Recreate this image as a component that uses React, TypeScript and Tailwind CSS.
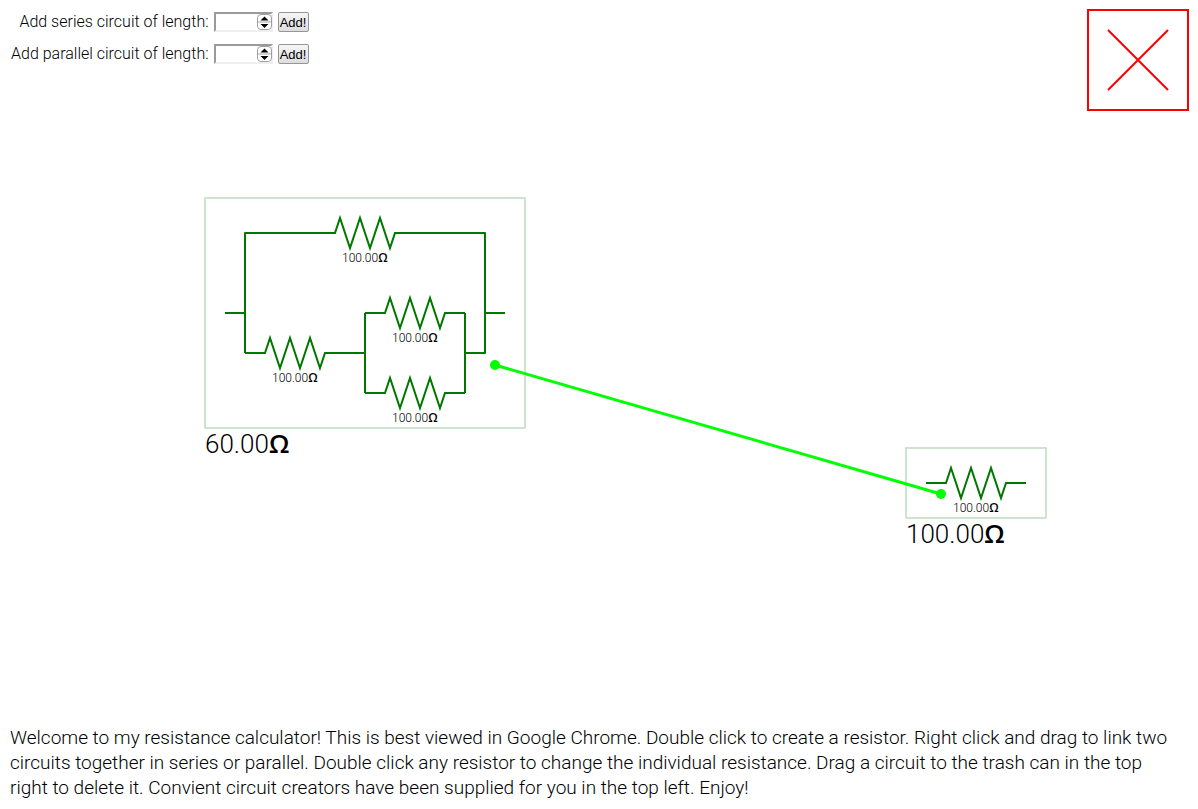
import React from "react";

type Point = { x: number; y: number };

function Resistor({ x, y }: Point) {
  return (
    <g>
      <path
        d={`M${x} ${y}h20l5 -15l10 30l10 -30l10 30l10 -30l10 30l5 -15h20`}
        fill="none"
        stroke="#007800"
        strokeWidth="2"
        strokeLinejoin="miter"
      />
      <text x={x + 27} y={y + 29} fontSize="12" className="fill-black">
        100.00
        <tspan className="font-['Open_Sans',sans-serif] font-semibold">Ω</tspan>
      </text>
    </g>
  );
}

function CircuitBox({ x, y, width, height, total }: Point & { width: number; height: number; total: string }) {
  return (
    <g>
      <rect x={x} y={y} width={width} height={height} fill="none" stroke="#cfe4cf" strokeWidth="2" strokeLinejoin="round" />
      <text x={x} y={y + height + 25} fontSize="26" className="fill-black">
        {total}
        <tspan className="font-['Open_Sans',sans-serif] font-semibold">Ω</tspan>
      </text>
    </g>
  );
}

function Link({ from, to }: { from: Point; to: Point }) {
  return (
    <g fill="#00ff00">
      <line x1={from.x} y1={from.y} x2={to.x} y2={to.y} stroke="#00ff00" strokeWidth="3" />
      <circle cx={from.x} cy={from.y} r="5" />
      <circle cx={to.x} cy={to.y} r="5" />
    </g>
  );
}

function Spinner() {
  return (
    <svg aria-hidden="true" width="15" height="16" viewBox="0 0 15 16" className="pointer-events-none absolute top-0.5 right-px">
      <rect x="0.5" y="0.5" width="14" height="15" rx="3.5" fill="#fff" stroke="#a0a0a0" />
      <path d="M1 8h13" stroke="#a8a8a8" />
      <path d="M3.5 6.5L7.5 2.5L11.5 6.5zM3.5 10L7.5 14L11.5 10z" fill="#000" />
    </svg>
  );
}

function LengthForm({ id, label }: { id: string; label: string }) {
  return (
    <form className="flex h-5 items-center justify-end" onSubmit={(e) => e.preventDefault()}>
      <label htmlFor={id} className="text-base leading-5">
        {label}
      </label>
      <div className="relative ml-[5px] h-5 w-[59px]">
        <input
          id={id}
          type="number"
          className="block h-5 w-full appearance-none border-2 border-t-[#9a9a9a] border-r-[#eeeeee] border-b-[#eeeeee] border-l-[#9a9a9a] bg-white pl-px text-[13px] outline-none [appearance:textfield] [&::-webkit-inner-spin-button]:appearance-none"
        />
        <Spinner />
      </div>
      <button
        type="submit"
        className="ml-[5px] h-5 w-[31px] rounded-xs border border-[#959595] bg-linear-to-b from-[#f6f6f6] to-[#dddddd] pt-px text-center font-['Liberation_Sans',Arial,sans-serif] text-[13px] leading-[17px] font-normal"
      >
        Add!
      </button>
    </form>
  );
}

export default function App() {
  return (
    <div className="relative flex min-h-screen flex-col justify-between bg-white font-[Roboto,sans-serif] font-light text-black">
      <svg
        role="img"
        aria-label="Circuit canvas"
        className="absolute inset-0 h-full w-full"
      >
        <CircuitBox x={205} y={198} width={320} height={230} total="60.00" />
        <path
          d="M225 313h20M485 313h20M315 233h-70v120M415 233h70v120h-20M345 353h20M365 393v-80M465 313v80"
          fill="none"
          stroke="#007800"
          strokeWidth="2"
          strokeLinejoin="round"
        />
        <Resistor x={315} y={233} />
        <Resistor x={245} y={353} />
        <Resistor x={365} y={313} />
        <Resistor x={365} y={393} />
        <CircuitBox x={906} y={448} width={140} height={70} total="100.00" />
        <Resistor x={926} y={483} />
        <Link from={{ x: 495, y: 365 }} to={{ x: 941, y: 494 }} />
      </svg>

      <header className="relative flex items-start justify-between pt-[9px] pr-[9px] pl-[11px]">
        <div className="flex flex-col gap-3 pt-[3px]">
          <LengthForm id="series-length" label="Add series circuit of length:" />
          <LengthForm id="parallel-length" label="Add parallel circuit of length:" />
        </div>
        <svg role="img" aria-label="Trash" width="102" height="102" viewBox="0 0 102 102" fill="none" stroke="#ff0000" strokeWidth="2">
          <rect x="1" y="1" width="100" height="100" />
          <path d="M21 21L81 81M81 21L21 81" />
        </svg>
      </header>

      <p className="relative pr-5 pb-[9px] pl-2.5 text-[19px] leading-[25px]">
        Welcome to my resistance calculator! This is best viewed in Google Chrome. Double click to create a
        resistor. Right click and drag to link two circuits together in series or parallel. Double click any
        resistor to change the individual resistance. Drag a circuit to the trash can in the top right to
        delete it. Convient circuit creators have been supplied for you in the top left. Enjoy!
      </p>
    </div>
  );
}
